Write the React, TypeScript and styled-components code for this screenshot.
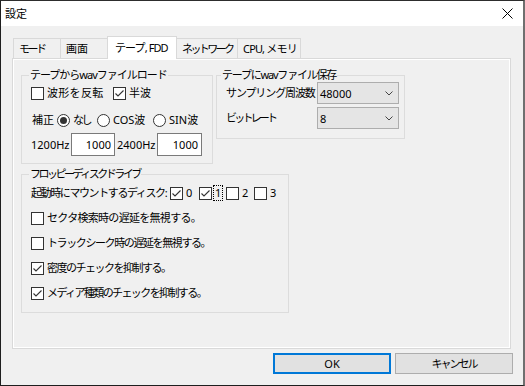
import styled, { createGlobalStyle } from 'styled-components';

const GlobalStyle = createGlobalStyle`
  html, body {
    margin: 0;
    padding: 0;
    background: #f0f0f0;
  }
  body {
    font-family: "Noto Sans", "Noto Sans CJK JP", sans-serif;
    font-size: 11px;
    color: #000;
  }
  * {
    box-sizing: border-box;
  }
`;

const Window = styled.div`
  width: 525px;
  height: 386px;
  display: flex;
  flex-direction: column;
  background: #f0f0f0;
  border-top: 1px solid #2d2d2d;
  border-left: 1px solid #1e1e1e;
  border-right: 2px solid #6f6f6f;
  border-bottom: 1px solid #1e1e1e;
  line-height: 14px;
`;

const TitleBar = styled.div`
  height: 25px;
  flex: none;
  background: #fff;
  display: flex;
  align-items: center;
  justify-content: space-between;
  padding-left: 4px;
`;

const CloseButton = styled.div`
  width: 32px;
  height: 25px;
  display: flex;
  align-items: center;
  justify-content: center;
`;

const Client = styled.div`
  flex: 1;
  display: flex;
  flex-direction: column;
  padding: 10px 10px 0 11px;
`;

const TabStrip = styled.div`
  height: 22px;
  display: flex;
  align-items: flex-end;
  padding-left: 1px;
`;

const Tab = styled.div<{ $w: number; $ls: number; $active?: boolean }>`
  width: ${({ $w }) => $w}px;
  height: ${({ $active }) => ($active ? 23 : 20)}px;
  margin-left: -1px;
  margin-bottom: ${({ $active }) => ($active ? '-1px' : '0')};
  border: 1px solid #d9d9d9;
  border-bottom: none;
  background: ${({ $active }) => ($active ? '#fff' : '#f0f0f0')};
  padding: ${({ $active }) => ($active ? '0 0 0 7px' : '1px 0 0 5px')};
  letter-spacing: ${({ $ls }) => $ls}px;
  display: flex;
  align-items: center;
  white-space: pre;
  overflow: hidden;
  position: relative;
  z-index: ${({ $active }) => ($active ? 1 : 0)};

  &:first-child {
    margin-left: 0;
  }
`;

const TabPage = styled.div`
  width: 499px;
  height: 291px;
  border: 1px solid #d9d9d9;
  background: #fff;
  padding: 1px;
`;

const PagePanel = styled.div`
  height: 100%;
  background: #f0f0f0;
  padding: 8px 0 0 7px;
  display: flex;
  flex-direction: column;
  align-items: flex-start;
  gap: 3px;
`;

const TopRow = styled.div`
  display: flex;
  align-items: flex-start;
  gap: 3px;
`;

const GroupBox = styled.fieldset<{ $w: number; $pr?: number; $pb?: number }>`
  width: ${({ $w }) => $w}px;
  min-width: 0;
  margin: 0;
  padding: 0 ${({ $pr }) => $pr ?? 0}px ${({ $pb }) => $pb ?? 7}px 9px;
  border: 1px solid #dcdcdc;
  display: flex;
  flex-direction: column;
`;

const Legend = styled.legend<{ $ls: number; $ml?: number }>`
  padding: 0 1px;
  margin-left: ${({ $ml }) => $ml ?? -2}px;
  line-height: 14px;
  letter-spacing: ${({ $ls }) => $ls}px;
  white-space: nowrap;
`;

const Row = styled.div<{ $mt?: number; $h?: number }>`
  display: flex;
  align-items: center;
  height: ${({ $h }) => $h ?? 16}px;
  margin-top: ${({ $mt }) => $mt ?? 0}px;
  white-space: nowrap;
`;

const Stack = styled.div<{ $mt: number; $gap: number }>`
  display: flex;
  flex-direction: column;
  margin-top: ${({ $mt }) => $mt}px;
  gap: ${({ $gap }) => $gap}px;
`;

const Item = styled.label<{ $w?: number }>`
  display: inline-flex;
  align-items: center;
  width: ${({ $w }) => ($w ? `${$w}px` : 'auto')};
  flex: none;
`;

const Box = styled.span`
  width: 13px;
  height: 13px;
  border: 1px solid #333;
  background: #fff;
  flex: none;
  display: flex;
`;

const Round = styled.span`
  width: 13px;
  height: 13px;
  border: 1px solid #333;
  border-radius: 50%;
  background: #fff;
  flex: none;
  display: flex;
  align-items: center;
  justify-content: center;
`;

const Dot = styled.span`
  width: 7px;
  height: 7px;
  border-radius: 50%;
  background: #333;
`;

const Caption = styled.span<{ $focus?: boolean; $ls?: number }>`
  margin-left: 1px;
  padding: 0 1px;
  border: 1px dotted ${({ $focus }) => ($focus ? '#000' : 'transparent')};
  line-height: 14px;
  letter-spacing: ${({ $ls }) => $ls ?? 0}px;
`;

const FieldLabel = styled.span<{ $w: number; $pl?: number; $ls?: number }>`
  width: ${({ $w }) => $w}px;
  padding-left: ${({ $pl }) => $pl ?? 0}px;
  letter-spacing: ${({ $ls }) => $ls ?? 0}px;
  flex: none;
`;

const Edit = styled.div<{ $w: number }>`
  width: ${({ $w }) => $w}px;
  height: 23px;
  border: 1px solid #7a7a7a;
  background: #fff;
  display: flex;
  align-items: center;
  justify-content: flex-end;
  padding: 1px 3px 0 0;
  flex: none;
`;

const ComboGrid = styled.div`
  display: grid;
  grid-template-columns: 91px 82px;
  row-gap: 3px;
  align-items: center;
  white-space: nowrap;
`;

const Combo = styled.div`
  height: 22px;
  border: 1px solid #adadad;
  background: #e5e5e5;
  display: flex;
  align-items: center;
  justify-content: space-between;
  padding: 1px 5px 0 2px;
`;

const ButtonRow = styled.div`
  display: flex;
  justify-content: flex-end;
  gap: 4px;
  margin-top: 4px;
`;

const Button = styled.button<{ $default?: boolean; $ls?: number }>`
  width: 118px;
  height: 21px;
  padding: 0;
  font: inherit;
  color: #000;
  letter-spacing: ${({ $ls }) => $ls ?? 0}px;
  background: #e1e1e1;
  border: ${({ $default }) => ($default ? '2px solid #0078d7' : '1px solid #adadad')};
  display: flex;
  align-items: center;
  justify-content: center;
`;

const Check = ({ checked }: { checked?: boolean }) => (
  <Box>
    {checked && (
      <svg width="11" height="11" viewBox="0 0 11 11">
        <polyline points="1.5,5.5 4,8 9.5,2.5" fill="none" stroke="#333" strokeWidth="1.1" />
      </svg>
    )}
  </Box>
);

const CheckItem = ({
  label,
  checked,
  focus,
  w,
  ls,
}: {
  label: string;
  checked?: boolean;
  focus?: boolean;
  w?: number;
  ls?: number;
}) => (
  <Item $w={w}>
    <Check checked={checked} />
    <Caption $focus={focus} $ls={ls}>
      {label}
    </Caption>
  </Item>
);

const RadioItem = ({
  label,
  checked,
  w,
  ls,
}: {
  label: string;
  checked?: boolean;
  w?: number;
  ls?: number;
}) => (
  <Item $w={w}>
    <Round>{checked && <Dot />}</Round>
    <Caption $ls={ls}>{label}</Caption>
  </Item>
);

const Chevron = () => (
  <svg width="8" height="5" viewBox="0 0 8 5">
    <polyline points="0.5,0.5 4,4 7.5,0.5" fill="none" stroke="#444" strokeWidth="1" />
  </svg>
);

const tabs = [
  { label: 'モード', w: 48, ls: -2.5 },
  { label: '画面', w: 48, ls: 0 },
  { label: 'テープ, FDD', w: 70, ls: -0.9, active: true },
  { label: 'ネットワーク', w: 62, ls: -2.6 },
  { label: 'CPU, メモリ', w: 64, ls: -0.8 },
];

const floppyOptions = [
  { label: 'セクタ検索時の遅延を無視する。', checked: false, ls: -0.7 },
  { label: 'トラックシーク時の遅延を無視する。', checked: false, ls: -1.4 },
  { label: '密度のチェックを抑制する。', checked: true, ls: -1.5 },
  { label: 'メディア種類のチェックを抑制する。', checked: true, ls: -1.6 },
];

export default function App() {
  return (
    <>
      <GlobalStyle />
      <Window>
        <TitleBar>
          <span>設定</span>
          <CloseButton>
            <svg width="11" height="11" viewBox="0 0 11 11">
              <path d="M0.5 0.5 L10.5 10.5 M10.5 0.5 L0.5 10.5" stroke="#000" strokeWidth="1" />
            </svg>
          </CloseButton>
        </TitleBar>
        <Client>
          <TabStrip>
            {tabs.map((t) => (
              <Tab key={t.label} $w={t.w} $ls={t.ls} $active={t.active}>
                {t.label}
              </Tab>
            ))}
          </TabStrip>
          <TabPage>
            <PagePanel>
              <TopRow>
                <GroupBox $w={192}>
                  <Legend $ls={-1}>テープからwavファイルロード</Legend>
                  <Row $mt={3}>
                    <CheckItem label="波形を反転" w={82} ls={0.3} />
                    <CheckItem label="半波" checked />
                  </Row>
                  <Row $mt={11}>
                    <FieldLabel $w={26} $pl={1}>補正</FieldLabel>
                    <RadioItem label="なし" checked w={40} ls={-2.5} />
                    <RadioItem label="COS波" w={56} />
                    <RadioItem label="SIN波" />
                  </Row>
                  <Row $mt={5} $h={23}>
                    <FieldLabel $w={40}>1200Hz</FieldLabel>
                    <Edit $w={44}>1000</Edit>
                    <FieldLabel $w={42} $pl={2}>2400Hz</FieldLabel>
                    <Edit $w={45}>1000</Edit>
                  </Row>
                </GroupBox>
                <GroupBox $w={189} $pr={5} $pb={9}>
                  <Legend $ls={-1.2} $ml={-5}>テープにwavファイル保存</Legend>
                  <ComboGrid>
                    <FieldLabel $w={91} $ls={-1.1}>サンプリング周波数</FieldLabel>
                    <Combo>
                      48000
                      <Chevron />
                    </Combo>
                    <FieldLabel $w={91} $ls={-2.8}>ビットレート</FieldLabel>
                    <Combo>
                      8
                      <Chevron />
                    </Combo>
                  </ComboGrid>
                </GroupBox>
              </TopRow>
              <GroupBox $w={268} $pb={11}>
                <Legend $ls={-2.5}>フロッピーディスクドライブ</Legend>
                <Stack $mt={4} $gap={9}>
                  <Row>
                    <FieldLabel $w={139} $ls={-1.4}>
                      起動時にマウントするディスク:
                    </FieldLabel>
                    <CheckItem label="0" checked w={29} />
                    <CheckItem label="1" checked focus w={27} />
                    <CheckItem label="2" w={28} />
                    <CheckItem label="3" />
                  </Row>
                  {floppyOptions.map((o) => (
                    <Row key={o.label}>
                      <CheckItem label={o.label} checked={o.checked} ls={o.ls} />
                    </Row>
                  ))}
                </Stack>
              </GroupBox>
            </PagePanel>
          </TabPage>
          <ButtonRow>
            <Button $default>OK</Button>
            <Button $ls={-2}>キャンセル</Button>
          </ButtonRow>
        </Client>
      </Window>
    </>
  );
}
